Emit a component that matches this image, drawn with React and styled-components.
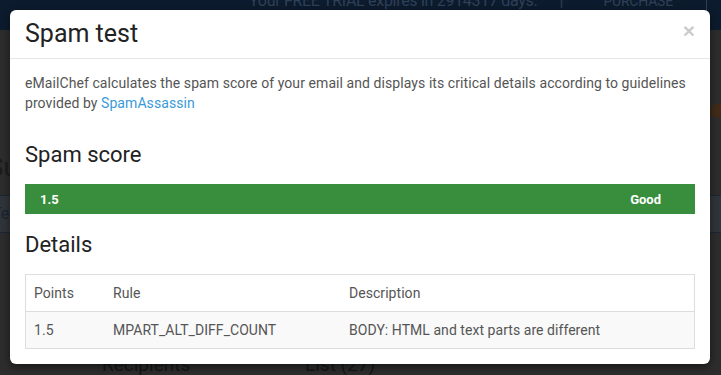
import React from "react";
import styled, { createGlobalStyle } from "styled-components";

const Global = createGlobalStyle`
  html, body { margin: 0; padding: 0; }
  body {
    width: 721px;
    height: 375px;
    overflow: hidden;
    background: #2d2d2d;
    font-family: Roboto, "Liberation Sans", sans-serif;
  }
`;

const Page = styled.div`
  position: relative;
  width: 721px;
  height: 375px;
  overflow: hidden;
  background: #2d2d2d;
  display: flex;
  flex-direction: column;
`;

const TopBar = styled.div`
  height: 30px;
  background: #0c1b2d;
  display: flex;
  align-items: flex-start;
  flex-shrink: 0;
  padding-left: 249px;
  color: #2f4057;
  font-size: 16px;
  white-space: nowrap;
  overflow: hidden;
`;

const TrialText = styled.span`
  margin-top: -9px;
  line-height: 20px;
  letter-spacing: -0.3px;
`;

const Sep = styled.span`
  margin: -9px 0 0 22px;
  line-height: 20px;
`;

const Purchase = styled.span`
  margin: -9px 0 0 40px;
  line-height: 20px;
  font-size: 14px;
  letter-spacing: -0.2px;
  width: 103px;
  border-right: 1px solid #2f4057;
  height: 39px;
  flex-shrink: 0;
`;

const PageBody = styled.div`
  flex: 1;
  display: flex;
  flex-direction: column;
`;

const PageTitle = styled.div`
  margin-top: 122px;
  margin-left: -12px;
  font-size: 26px;
  color: #1c1c1c;
  height: 43px;
`;

const SubNav = styled.div`
  height: 36px;
  background: #30353b;
  border-top: 1px solid #1c2633;
  border-bottom: 1px solid #1c2633;
  color: #1a2430;
  font-size: 16px;
  line-height: 36px;
  text-indent: -8px;
`;

const InfoRow = styled.div`
  margin-top: 120px;
  display: flex;
  font-size: 19px;
  color: #161616;
`;

const InfoLabel = styled.span`
  width: 203px;
  padding-left: 102px;
`;

const Dot = styled.span`
  position: absolute;
  left: 710px;
  top: 104px;
  width: 14px;
  height: 14px;
  border-radius: 50%;
  background: #4a2a10;
  opacity: 0.7;
`;

const Modal = styled.div`
  position: absolute;
  left: 10px;
  top: 10px;
  width: 700px;
  background: #fff;
  border-radius: 6px;
  box-shadow: 0 3px 9px rgba(0, 0, 0, 0.5);
  overflow: hidden;
`;

const Header = styled.div`
  display: flex;
  align-items: flex-start;
  justify-content: space-between;
  padding: 11px 15px;
  border-bottom: 1px solid #e5e5e5;
`;

const Title = styled.h4`
  margin: 0;
  font-size: 25px;
  font-weight: 400;
  line-height: 26px;
  color: #222;
`;

const Close = styled.button`
  border: 0;
  background: none;
  padding: 0;
  margin: -1px 0 0 0;
  font-family: "Liberation Sans", sans-serif;
  font-size: 21px;
  font-weight: 700;
  line-height: 1;
  color: #000;
  opacity: 0.2;
  cursor: pointer;
`;

const Body = styled.div`
  padding: 14px 15px 15px;
`;

const Intro = styled.p`
  margin: 0;
  font-size: 14px;
  line-height: 20px;
  letter-spacing: 0.075px;
  color: #555;
`;

const Link = styled.a`
  color: #3a9ad9;
  text-decoration: none;
`;

const Heading = styled.h3`
  margin: ${(p) => p.$top}px 0 16px;
  font-size: 22px;
  font-weight: 400;
  line-height: 26px;
  color: #222;
`;

const ScoreBar = styled.div`
  height: 30px;
  background: #388e3c;
  display: flex;
  align-items: center;
  justify-content: space-between;
  padding: 0 34px 0 15px;
  color: #fff;
  font-size: 13px;
  font-weight: 700;
`;

const Table = styled.table`
  width: 100%;
  border-collapse: collapse;
  border: 1px solid #ddd;
  table-layout: fixed;
  font-size: 14px;
  letter-spacing: 0.05px;
  color: #555;
`;

const Th = styled.th`
  text-align: left;
  font-weight: 400;
  padding: 0 8px;
  height: 36px;
  border-bottom: 1px solid #ddd;
  width: ${(p) => (p.$w ? `${p.$w}px` : "auto")};
`;

const Row = styled.tr`
  background: #f9f9f9;
`;

const Td = styled.td`
  padding: 0 8px;
  height: 36px;
`;

export default function App() {
  return (
    <>
      <Global />
      <Page>
        <TopBar>
          <TrialText>Your FREE TRIAL expires in 2914317 days.</TrialText>
          <Sep>|</Sep>
          <Purchase>PURCHASE</Purchase>
        </TopBar>
        <PageBody>
          <PageTitle>Summary</PageTitle>
          <SubNav>Text</SubNav>
          <InfoRow>
            <InfoLabel>Recipients</InfoLabel>
            <span>List (27)</span>
          </InfoRow>
        </PageBody>
        <Dot />
        <Modal>
          <Header>
            <Title>Spam test</Title>
            <Close aria-label="Close">×</Close>
          </Header>
          <Body>
            <Intro>
              eMailChef calculates the spam score of your email and displays its critical details according to guidelines
              provided by <Link href="#">SpamAssassin</Link>
            </Intro>
            <Heading $top={29}>Spam score</Heading>
            <ScoreBar>
              <span>1.5</span>
              <span>Good</span>
            </ScoreBar>
            <Heading $top={18}>Details</Heading>
            <Table>
              <thead>
                <tr>
                  <Th $w={63}>Points</Th>
                  <Th $w={220}>Rule</Th>
                  <Th>Description</Th>
                </tr>
              </thead>
              <tbody>
                <Row>
                  <Td>1.5</Td>
                  <Td>MPART_ALT_DIFF_COUNT</Td>
                  <Td>BODY: HTML and text parts are different</Td>
                </Row>
              </tbody>
            </Table>
          </Body>
        </Modal>
      </Page>
    </>
  );
}
